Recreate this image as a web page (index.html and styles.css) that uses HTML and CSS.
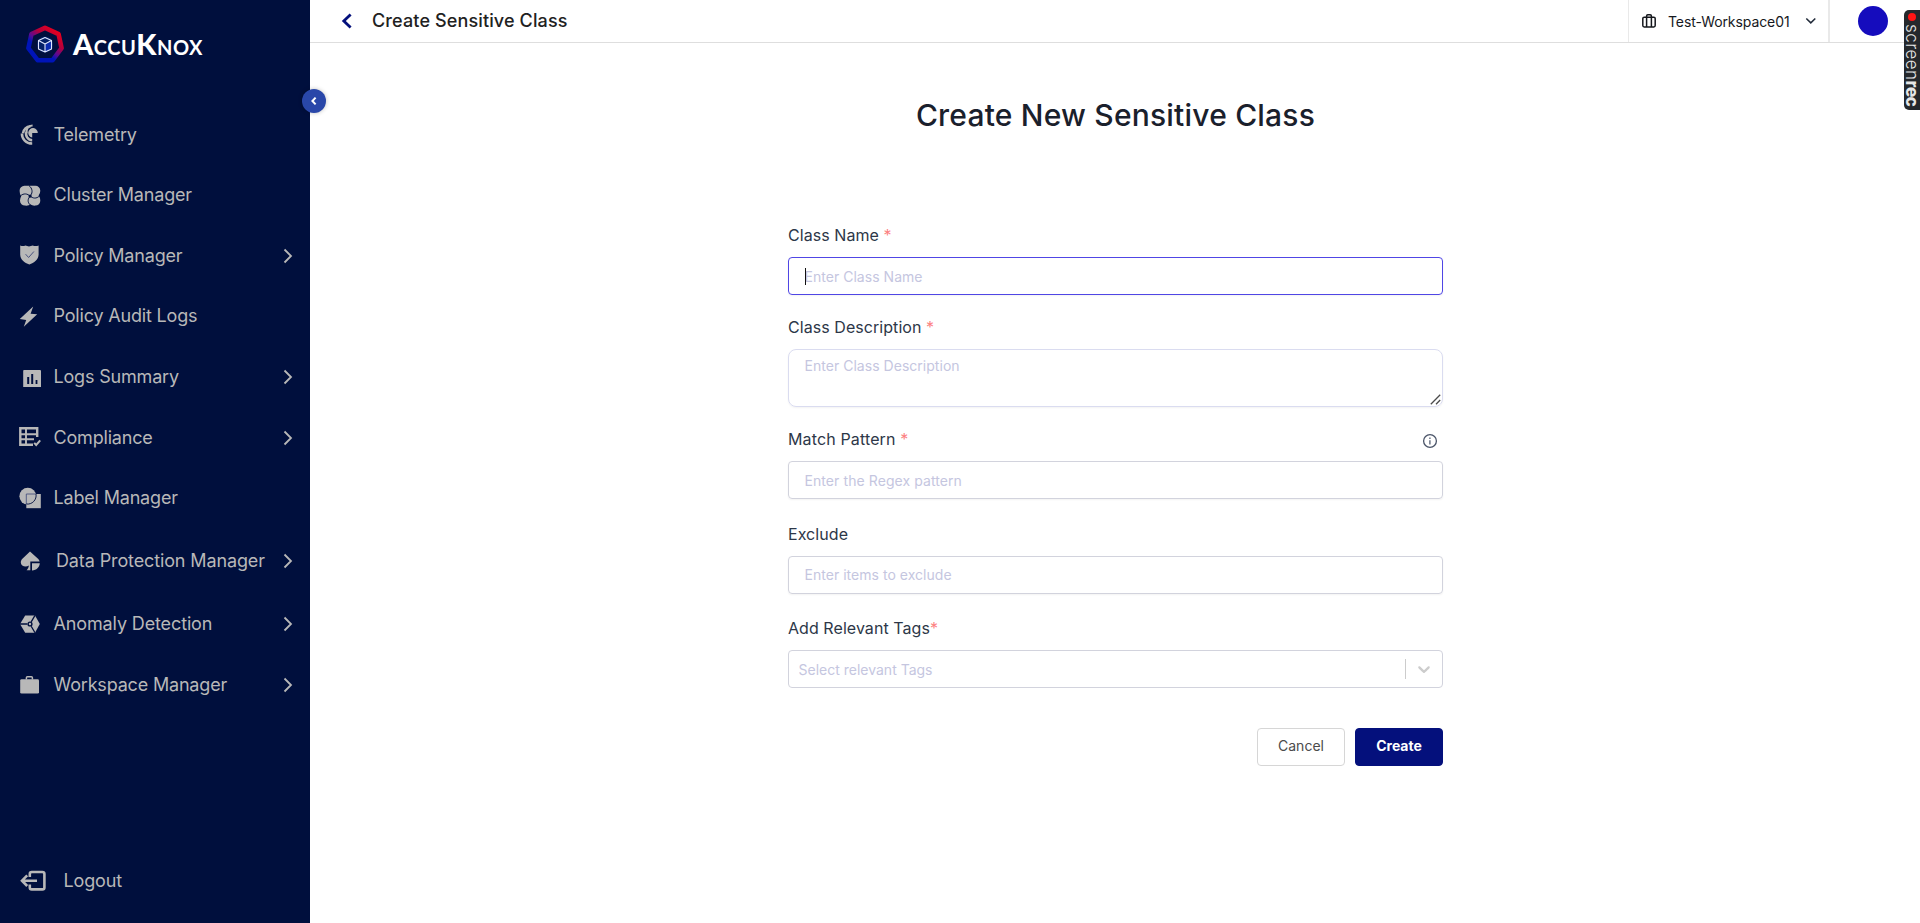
FILE: index.html
```html
<!DOCTYPE html>
<html lang="en">
<head>
<meta charset="utf-8">
<title>Create Sensitive Class</title>
<link rel="stylesheet" href="styles.css">
</head>
<body>
<div class="app">
  <aside class="sidebar">
    <div class="brand">
      <svg class="brand-mark" width="40" height="40" viewBox="0 0 40 40">
        <defs><linearGradient id="ring" x1="30" y1="6" x2="12" y2="30" gradientUnits="userSpaceOnUse"><stop offset="0" stop-color="#e3001f"/><stop offset=".35" stop-color="#b4003c"/><stop offset=".62" stop-color="#5a0a92"/><stop offset=".8" stop-color="#0014b8"/></linearGradient></defs>
        <path d="M20 3.9 33.6 10.2 36.6 24.2 27.6 36.2H12.6L3.4 24.2 6.4 10.2Z" fill="none" stroke="url(#ring)" stroke-width="4.6" stroke-linejoin="round"/>
        <circle cx="20" cy="20.5" r="8" fill="#08308a" opacity=".55"/>
        <path d="M20 20.7V27.8L26.4 24.9V17.3Z" fill="#0b2bb0"/>
        <path d="M20 13.5 26.5 16.5V24.9L20 27.9 13.5 24.9V16.5ZM13.5 16.5 20 20.1 26.5 16.5M20 20.1V27.5" fill="none" stroke="#dfe6ff" stroke-width="1.1" stroke-linejoin="round"/>
      </svg>
      <span class="brand-name"><b>A</b>CCU<b>K</b>NOX</span>
    </div>
    <nav class="menu">
      <a class="item"><svg class="ico" viewBox="0 0 24 24"><path d="M12.5 3.2A8.6 8.6 0 0 0 5 10.2M3.9 10.6C3.9 16 8 20.6 14.2 20.6M8.9 8A6.2 6.2 0 0 0 14.2 17.2" fill="none" stroke="currentColor" stroke-width="2.5"/><path d="M14.6 2.5A6.2 6.2 0 0 0 8.6 8" fill="none" stroke="currentColor" stroke-width="2"/><path d="M14.2 14.6A4.8 4.8 0 1 1 19.8 10H14.2Z" fill="currentColor"/></svg><span>Telemetry</span></a>
      <a class="item"><svg class="ico" viewBox="0 0 24 24"><path d="M6.4 1.8H17.4A4.9 4.9 0 0 1 22.3 6.7Q22.3 9.6 20.6 11.4 22.3 13.4 22.3 16.6A4.9 4.9 0 0 1 17.4 21.6Q14.4 21.9 12.6 20.6 10.6 21.9 7 21.6A4.9 4.9 0 0 1 2 16.6Q2 14.2 3.2 12.2 1.6 10.4 1.6 6.8A4.9 4.9 0 0 1 6.4 1.8Z" fill="currentColor"/><g fill="none" stroke="#000f3d" stroke-width=".95"><path d="M11 1.6C14.4 4.4 15 8.4 12.6 11.4M22.2 10.8C20 14.4 16 15 13 12.7M13.4 21.8C9.8 19.6 9.2 15.8 11.5 13M1.7 12.9C4 9.6 8.2 9 11.2 11.4"/></g><circle cx="12.1" cy="12.1" r="1.6" fill="#000f3d"/></svg><span>Cluster Manager</span></a>
      <a class="item"><svg class="ico" viewBox="0 0 24 24"><path d="M2.2 1.4Q5 2.6 7.3 1.4L11 2.4 14.7 1.4Q17.5 2.6 20.6 1.4V10.5C20.6 15.5 16 19 11.4 20.4 6.5 19 2.2 15.5 2.2 10.5Z" fill="currentColor"/><path d="m7.6 10.2 3 3.3 5.3-6" fill="none" stroke="#4a5380" stroke-width="1"/></svg><span>Policy Manager</span><svg class="chev" viewBox="0 0 12 16"><path d="m2.5 1.5 6.5 6.5-6.5 6.5" /></svg></a>
      <a class="item"><svg class="ico" viewBox="0 0 24 24"><path d="M15.2 1.5 1.8 14.1 8.2 14.9 5.8 21.7 19.2 9.3 12.6 8.7Z" fill="currentColor"/></svg><span>Policy Audit Logs</span></a>
      <a class="item"><svg class="ico" viewBox="0 0 24 24"><path fill-rule="evenodd" fill="currentColor" d="M6 5H22Q23 5 23 6V22H5.2V6Q5.2 5 6 5ZM9.2 12V19H11.2V12ZM13.2 9V19H15.2V9ZM17.6 15V19H19.4V15Z"/></svg><span>Logs Summary</span><svg class="chev" viewBox="0 0 12 16"><path d="m2.5 1.5 6.5 6.5-6.5 6.5"/></svg></a>
      <a class="item low"><svg class="ico" viewBox="0 0 24 24"><g transform="translate(0 -1)"><g fill="none" stroke="currentColor"><path d="M19.2 12V3.2H2.3V19.8H15" stroke-width="2.4"/><path d="M8 3V19M3 9.2H19M3 14.2H16" stroke-width="1.9"/><path d="m16.2 17.8 2 2.2 4-4.6" stroke-width="2"/></g></g></svg><span>Compliance</span><svg class="chev" viewBox="0 0 12 16"><path d="m2.5 1.5 6.5 6.5-6.5 6.5"/></svg></a>
      <a class="item"><svg class="ico" viewBox="0 0 24 24"><circle cx="9.8" cy="10.2" r="8.4" fill="currentColor"/><path d="M8.3 8H22.8V22.2H8.3Z" fill="currentColor"/><path d="M8.3 18V8H18" fill="none" stroke="#4a5380" stroke-width=".9"/><path d="M18 8A8.6 8.6 0 0 1 8.3 18" fill="none" stroke="#000f3d" stroke-width=".9"/></svg><span>Label Manager</span></a>
      <a class="item item-data"><svg class="ico" viewBox="0 0 24 24"><path d="M12 2.5 20.3 10Q21.4 11.2 21.6 12.4H12.3V21.3H8.6C9.8 20 10.8 18.6 10.8 16.6 8 18.5 2.8 17.4 2.8 13.6 2.8 12 3.4 10.8 4.4 9.8Z" fill="currentColor"/><path d="M14 14.2H21.8C21.4 18.5 18.5 21 14 21.4Z" fill="currentColor"/></svg><span>Data Protection Manager</span><svg class="chev" viewBox="0 0 12 16"><path d="m2.5 1.5 6.5 6.5-6.5 6.5"/></svg></a>
      <a class="item wide"><svg class="ico" viewBox="0 0 24 24"><path d="M7.2 3.4H17L21.8 12 17 20.8H7.2L2 12Z" fill="currentColor"/><path d="M2 12H9.3M13.2 9.8 17 3.4M13.2 14.2 17 20.8" stroke="#000f3d" stroke-width="1.3"/><circle cx="12" cy="12" r="2.6" fill="#000f3d"/><circle cx="12" cy="12" r="1.2" fill="currentColor"/></svg><span>Anomaly Detection</span><svg class="chev" viewBox="0 0 12 16"><path d="m2.5 1.5 6.5 6.5-6.5 6.5"/></svg></a>
      <a class="item low"><svg class="ico" viewBox="0 0 24 24"><path d="M3.6 6.2H19.6Q21 6.2 21 7.6V19.2Q21 20.6 19.6 20.6H3.6Q2.2 20.6 2.2 19.2V7.6Q2.2 6.2 3.6 6.2Z" fill="currentColor"/><path d="M8.4 6.5V4.7Q8.4 3.7 9.4 3.7H13.4Q14.4 3.7 14.4 4.7V6.5" fill="none" stroke="currentColor" stroke-width="1.5"/></svg><span>Workspace Manager</span><svg class="chev" viewBox="0 0 12 16"><path d="m2.5 1.5 6.5 6.5-6.5 6.5"/></svg></a>
    </nav>
    <a class="logout"><svg width="26" height="22" viewBox="0 0 26 22"><g fill="none" stroke="currentColor" stroke-width="2.6"><path d="M9.8 7V4Q9.8 2 11.8 2H22.4Q24.4 2 24.4 4V17.4Q24.4 19.4 22.4 19.4H11.8Q9.8 19.4 9.8 17.4V14.4"/><path d="M17 10.7H2.4M7.2 5.4 2 10.7 7.2 16"/></g></svg><span>Logout</span></a>
    <button class="collapse" aria-label="Collapse"><svg width="8" height="10" viewBox="0 0 8 10"><path d="M5.6 1.6 2.4 5 5.6 8.4" fill="none" stroke="#fff" stroke-width="2"/></svg></button>
  </aside>
  <main class="page">
    <header class="topbar">
      <svg class="back" width="12" height="17" viewBox="0 0 12 17"><path d="M9.6 1.4 2.8 8 9.6 14.6" fill="none" stroke="#04107c" stroke-width="2.8"/></svg>
      <h1 class="crumb">Create Sensitive Class</h1>
      <div class="workspace">
        <svg width="14" height="14" viewBox="0 0 14 14"><g fill="none" stroke="#16181d" stroke-width="1.5"><rect x=".8" y="3.2" width="12.4" height="9.8" rx="1.4"/><path d="M4.6 13V2Q4.6.8 5.8.8H8.2Q9.4.8 9.4 2V13"/></g></svg>
        <span class="workspace-name">Test-Workspace01</span>
        <svg width="12" height="8" viewBox="0 0 12 8"><path d="m1.3 1.5 4.5 4.4 4.5-4.4" fill="none" stroke="#222b3a" stroke-width="1.5"/></svg>
      </div>
      <span class="avatar"></span>
    </header>
    <form class="form">
      <h2 class="title">Create New Sensitive Class</h2>
      <div class="field f-name"><label>Class Name <i>*</i></label><div class="box focus"><input placeholder="Enter Class Name"><span class="caret"></span></div></div>
      <div class="field f-desc"><label>Class Description <i>*</i></label><div class="area"><textarea placeholder="Enter Class Description"></textarea><svg class="grip" width="11" height="11" viewBox="0 0 11 11"><path d="M.8 10.2 10.2.8M6 10.2 10.2 6" stroke="#4a4a4a" stroke-width="1.3"/></svg></div></div>
      <div class="field f-match"><label>Match Pattern <i>*</i><svg class="info" width="16" height="16" viewBox="0 0 16 16"><circle cx="8" cy="8" r="6.4" fill="none" stroke="#4a5468" stroke-width="1.3"/><path d="M7.9 7.2V11.4M7.9 4.6V6" stroke="#6b7385" stroke-width="1.5"/></svg></label><div class="box"><input placeholder="Enter the Regex pattern"></div></div>
      <div class="field f-excl"><label>Exclude</label><div class="box"><input placeholder="Enter items to exclude"></div></div>
      <div class="field f-tags"><label>Add Relevant Tags<i>*</i></label><div class="box select"><span class="hint">Select relevant Tags</span><span class="sep"></span><svg width="20" height="20" viewBox="0 0 20 20"><path fill="#ccc" d="M4.516 7.548c.436-.446 1.043-.481 1.576 0L10 11.295l3.908-3.747c.533-.481 1.141-.446 1.574 0 .436.445.408 1.197 0 1.615-.406.418-4.695 4.502-4.695 4.502a1.095 1.095 0 0 1-1.576 0S4.924 9.581 4.516 9.163s-.436-1.17 0-1.615z"/></svg></div></div>
      <div class="actions"><button type="button" class="btn">Cancel</button><button type="button" class="btn primary">Create</button></div>
    </form>
    <div class="recorder"><span class="dot"></span><span class="rec-name">screen<b>rec</b></span></div>
  </main>
</div>
</body>
</html>
```
FILE: styles.css
```css
* { box-sizing: border-box; }
body { margin: 0; font-family: Inter, "Liberation Sans", sans-serif; background: #fff; }
.app { display: flex; height: 923px; overflow: hidden; }

.sidebar { position: relative; width: 310px; flex: none; background: #000f3d; color: #b8b8b8; display: flex; flex-direction: column; padding-bottom: 12px; }
.brand { height: 104.75px; padding: 24px 0 0 25px; display: flex; gap: 8px; align-items: flex-start; }
.brand-name { font: 700 20px/40px Lato, sans-serif; letter-spacing: .5px; color: #fff; white-space: nowrap; }
.brand-name b { font-size: 29px; font-weight: 900; }
.item { display: flex; align-items: center; height: 60.5px; padding: 0 16px 0 18px; font-size: 18px; letter-spacing: -.18px; }
.item span { flex: 1; margin-left: 11.5px; padding-bottom: 2px; white-space: nowrap; }
.item-data { height: 65.5px; letter-spacing: -.12px; }
.item-data span { margin-left: 14px; }
.wide { letter-spacing: -.13px; }
.low span { padding-bottom: 0; }
.low .chev { margin-bottom: 0; }
.ico { width: 24px; height: 24px; }
.chev { width: 12px; height: 16px; margin-bottom: 1px; }
.chev path { fill: none; stroke: currentColor; stroke-width: 1.8; }
.logout { margin-top: auto; height: 60px; display: flex; align-items: center; gap: 17.5px; padding-left: 20px; font-size: 18px; letter-spacing: -.15px; }
.logout span { padding-bottom: 2px; }
.collapse { position: absolute; left: 302px; top: 89px; width: 24px; height: 24px; padding: 0; border: 0; border-radius: 50%; background: #2947a9; display: flex; align-items: center; justify-content: center; box-shadow: 0 0 4px rgba(0, 0, 0, .25); }

.page { position: relative; flex: 1; display: flex; flex-direction: column; }
.topbar { height: 43px; border-bottom: 1px solid #dedede; display: flex; align-items: center; padding: 0 32px 0 31px; }
.back { flex: none; }
.crumb { margin: 0 auto 0 19px; font-size: 18px; font-weight: 500; line-height: 22px; letter-spacing: .13px; color: #212121; }
.workspace { align-self: stretch; width: 202px; display: flex; align-items: center; padding: 0 11px 0 13px; border: 1px solid #e9e9e9; border-width: 0 2px 0 1px; }
.workspace-name { margin: 0 auto 0 12px; padding-top: 1px; font-size: 14px; letter-spacing: -.08px; color: #16181d; }
.avatar { width: 30px; height: 30px; margin-left: 28px; border-radius: 50%; background: #150cbd; }

.form { width: 655px; margin: 0 0 0 478px; }
.title { margin: 52px 0 89px; text-align: center; font-size: 30px; font-weight: 500; line-height: 40px; letter-spacing: .2px; color: #1a202c; }
.field label { display: flex; align-items: center; height: 22px; margin-bottom: 11px; font-size: 16px; letter-spacing: .06px; color: #2d3748; white-space: pre; }
.field label i { font-style: normal; color: #fc8181; }
.f-name { margin-bottom: 21px; }
.f-desc { margin-bottom: 21px; }
.f-match { margin-bottom: 24px; }
.f-match label { letter-spacing: .14px; }
.f-excl { margin-bottom: 23px; }
.info { margin: 4px 5px 0 auto; }
.box { position: relative; display: flex; align-items: center; height: 38px; border: 1px solid #d2d3dd; border-radius: 4px; box-shadow: 0 1px 2px rgba(0, 0, 0, .05); }
.focus { border-color: #5046e5; }
input, textarea { display: block; width: 100%; border: 0; outline: 0; background: none; padding: 2px 15.5px 0; font: 14px/20px Inter, sans-serif; letter-spacing: .03px; }
.f-match input { letter-spacing: .08px; }
.f-excl input { padding-top: 0; }
::placeholder { color: #c5c6df; opacity: 1; }
.area { position: relative; }
textarea { height: 58px; padding: 6px 15.5px; border: 1px solid #dadcf0; border-radius: 8px; box-shadow: 0 1px 2px rgba(0, 0, 0, .05); resize: none; }
.grip { position: absolute; right: 2px; bottom: 2px; }
.caret { position: absolute; left: 16px; top: 10px; width: 1px; height: 17px; background: #111; }
.select { box-shadow: none; padding-right: 8px; }
.hint { flex: 1; padding: 1px 0 0 9.5px; font-size: 14px; color: #c5c6df; }
.sep { width: 1px; height: 20px; background: #ccc; margin-right: 8px; }
.actions { display: flex; justify-content: flex-end; gap: 10px; margin-top: 40px; }
.btn { width: 88px; height: 38px; padding: 0 0 3px; border: 1px solid #d6d6d6; border-radius: 4px; background: #fff; color: #4b4b4b; font: 14px Inter, sans-serif; }
.primary { border-color: #04107c; background: #04107c; color: #fff; font-weight: 700; }

.recorder { position: absolute; right: 0; top: 10px; width: 16px; height: 100px; border-radius: 5px 0 0 5px; background: #25282c; color: #e6e6e6; writing-mode: vertical-rl; display: flex; align-items: center; padding-top: 3px; font: 300 17px/16px Inter, sans-serif; letter-spacing: .45px; }
.rec-name b { font-weight: 800; letter-spacing: -.3px; }
.dot { width: 8px; height: 8px; margin-bottom: 3px; border-radius: 50%; background: #ff1515; }
```
